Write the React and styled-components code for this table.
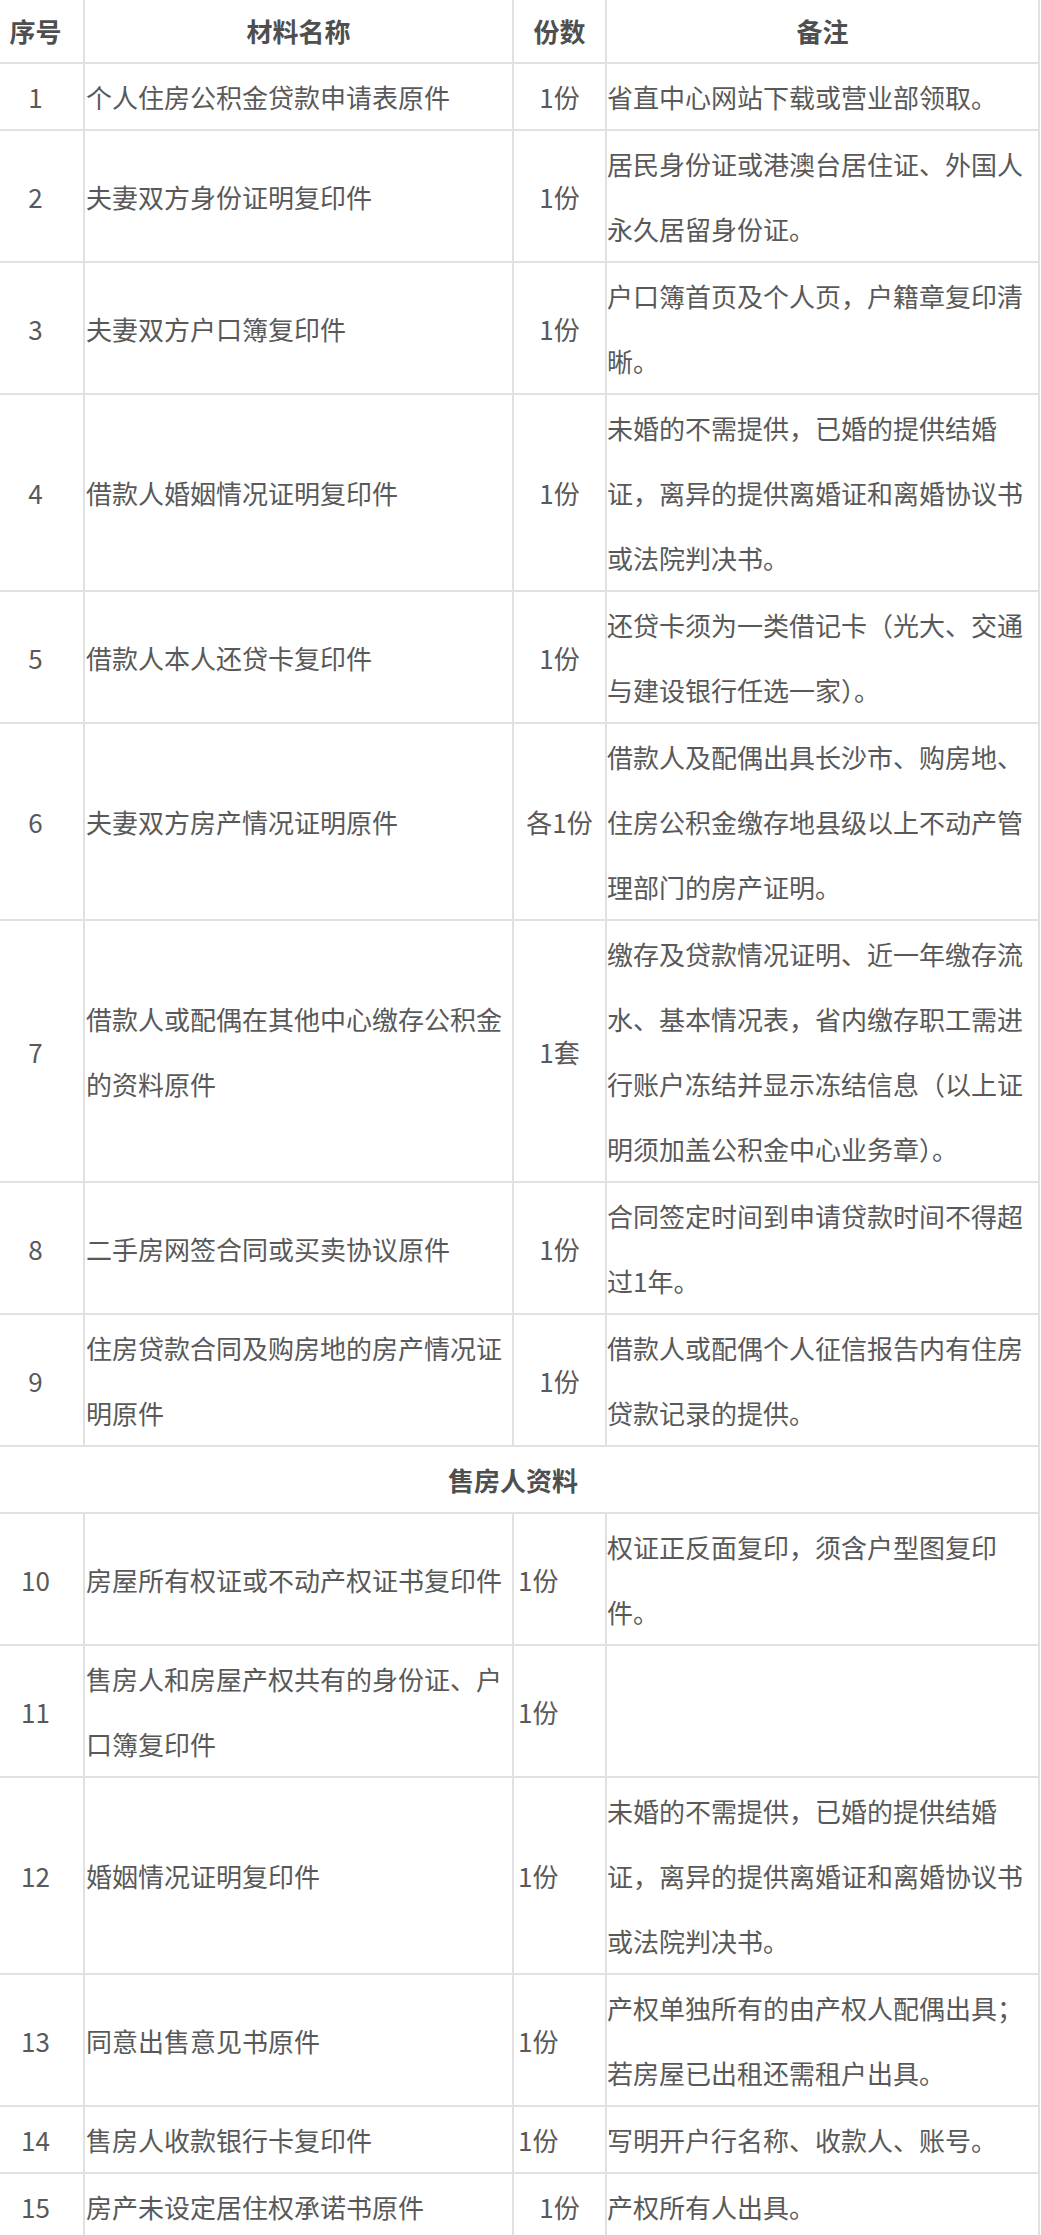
import React from 'react';
import styled, { createGlobalStyle } from 'styled-components';

const GlobalStyle = createGlobalStyle`
    html, body {
        margin: 0;
        padding: 0;
        background: #fff;
        overflow-x: hidden;
    }
    * {
        box-sizing: border-box;
    }
`;

const LINE = '#e1e1e1';

const Sheet = styled.table`
    table-layout: fixed;
    border-collapse: separate;
    border-spacing: 0;
    width: 1052px;
    margin-left: -12px;
    font-family: 'Noto Sans CJK SC', 'Noto Sans', sans-serif;
    font-size: 26px;
    color: #595959;
`;

const Col = styled.col`
    width: ${(p) => p.$w}px;
`;

const Cell = styled.td`
    border-right: 2px solid ${LINE};
    border-bottom: 2px solid ${LINE};
    line-height: 65px;
    padding: 0 ${(p) => p.$pr || 0}px 0 ${(p) => p.$pl || 0}px;
    text-align: ${(p) => p.$align || 'left'};
    vertical-align: middle;
    word-break: break-all;
`;

const HeadCell = styled.th`
    border-right: 2px solid ${LINE};
    border-bottom: 2px solid ${LINE};
    line-height: 62px;
    padding: 0 ${(p) => p.$pr || 0}px 0 0;
    text-align: center;
    font-weight: 700;
    color: #4f4f4f;
`;

const SectionCell = styled.td`
    border-right: 2px solid ${LINE};
    border-bottom: 2px solid ${LINE};
    line-height: 65px;
    padding: 0;
    text-align: center;
    font-weight: 700;
    color: #4f4f4f;
`;

// 购房人(借款人)材料
const buyerRows = [
    { no: 1, name: '个人住房公积金贷款申请表原件', count: '1份', note: '省直中心网站下载或营业部领取。' },
    { no: 2, name: '夫妻双方身份证明复印件', count: '1份', note: '居民身份证或港澳台居住证、外国人永久居留身份证。' },
    { no: 3, name: '夫妻双方户口簿复印件', count: '1份', note: '户口簿首页及个人页，户籍章复印清晰。' },
    { no: 4, name: '借款人婚姻情况证明复印件', count: '1份', note: '未婚的不需提供，已婚的提供结婚证，离异的提供离婚证和离婚协议书或法院判决书。' },
    { no: 5, name: '借款人本人还贷卡复印件', count: '1份', note: '还贷卡须为一类借记卡（光大、交通与建设银行任选一家）。' },
    { no: 6, name: '夫妻双方房产情况证明原件', count: '各1份', note: '借款人及配偶出具长沙市、购房地、住房公积金缴存地县级以上不动产管理部门的房产证明。' },
    { no: 7, name: '借款人或配偶在其他中心缴存公积金的资料原件', count: '1套', note: '缴存及贷款情况证明、近一年缴存流水、基本情况表，省内缴存职工需进行账户冻结并显示冻结信息（以上证明须加盖公积金中心业务章）。' },
    { no: 8, name: '二手房网签合同或买卖协议原件', count: '1份', note: '合同签定时间到申请贷款时间不得超过1年。' },
    { no: 9, name: '住房贷款合同及购房地的房产情况证明原件', count: '1份', note: '借款人或配偶个人征信报告内有住房贷款记录的提供。' },
];

// 售房人资料 (份数一栏大多靠左)
const sellerRows = [
    { no: 10, name: '房屋所有权证或不动产权证书复印件', count: '1份', left: true, note: '权证正反面复印，须含户型图复印件。' },
    { no: 11, name: '售房人和房屋产权共有的身份证、户口簿复印件', count: '1份', left: true, note: '' },
    { no: 12, name: '婚姻情况证明复印件', count: '1份', left: true, note: '未婚的不需提供，已婚的提供结婚证，离异的提供离婚证和离婚协议书或法院判决书。' },
    { no: 13, name: '同意出售意见书原件', count: '1份', left: true, note: '产权单独所有的由产权人配偶出具；若房屋已出租还需租户出具。' },
    { no: 14, name: '售房人收款银行卡复印件', count: '1份', left: true, note: '写明开户行名称、收款人、账号。' },
    { no: 15, name: '房产未设定居住权承诺书原件', count: '1份', note: '产权所有人出具。' },
];

const Row = ({ no, name, count, note, left }) => (
    <tr>
        <Cell $align="center">{no}</Cell>
        <Cell $pl={1}>{name}</Cell>
        <Cell $align={left ? 'left' : 'center'} $pl={left ? 4 : 0}>
            {count}
        </Cell>
        <Cell>{note}</Cell>
    </tr>
);

const App = () => {
    return (
        <>
            <GlobalStyle />
            <Sheet>
                <colgroup>
                    <Col $w={97} />
                    <Col $w={429} />
                    <Col $w={93} />
                    <Col $w={433} />
                </colgroup>
                <thead>
                    <tr>
                        <HeadCell>序号</HeadCell>
                        <HeadCell>材料名称</HeadCell>
                        <HeadCell>份数</HeadCell>
                        <HeadCell>备注</HeadCell>
                    </tr>
                </thead>
                <tbody>
                    {buyerRows.map((r) => (
                        <Row key={r.no} {...r} />
                    ))}
                    <tr>
                        <SectionCell colSpan={4}>售房人资料</SectionCell>
                    </tr>
                    {sellerRows.map((r) => (
                        <Row key={r.no} {...r} />
                    ))}
                </tbody>
            </Sheet>
        </>
    );
};

export default App;
